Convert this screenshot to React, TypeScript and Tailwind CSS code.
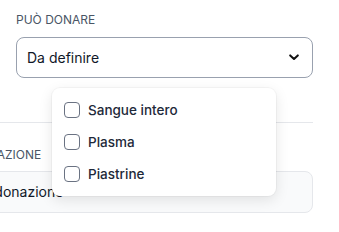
import React from 'react';

const options = ['Sangue intero', 'Plasma', 'Piastrine'];

export default function App() {
  return (
    <div className="relative w-[339px] h-[232px] overflow-hidden bg-white font-['Inter',sans-serif]">
      <div className="pl-4 pr-[26px] pt-3">
        <label className="block text-xs leading-4 uppercase text-gray-600">Può donare</label>

        <div className="relative mt-[9px]">
          <button
            type="button"
            className="flex h-[41px] w-full items-center justify-between rounded-lg border border-gray-400 bg-white pl-[10px] pr-[12px] text-sm text-gray-900"
          >
            <span>Da definire</span>
            <svg width="10" height="7" viewBox="0 0 10 7" fill="none" className="mr-px">
              <path d="M1.2 1.4 L5 5 L8.8 1.4" stroke="#111" strokeWidth="2" strokeLinecap="round" strokeLinejoin="round" />
            </svg>
          </button>

          {/* dropdown menu */}
          <div className="absolute left-9 top-[51px] z-10 w-[224px] rounded-lg bg-white py-1.5 shadow-[0_4px_14px_rgba(0,0,0,0.1),0_0_0_1px_rgba(0,0,0,0.03)]">
            {options.map((o) => (
              <label key={o} className="flex h-8 items-center gap-2 px-3">
                <span className="h-4 w-4 rounded-[4px] border border-gray-500 bg-white" />
                <span className="text-[13.5px] font-medium text-gray-800">{o}</span>
              </label>
            ))}
          </div>
        </div>

        <div className="-ml-4 mt-[44px] border-t border-gray-200" />

        <div className="-ml-[128px] pt-[24px]">
          <label className="block text-xs leading-4 uppercase text-gray-600">Data ultima donazione</label>
          <div className="mt-2 flex h-[42px] items-center rounded-lg border border-gray-200 bg-gray-50 pl-[27px] pr-3 text-sm text-gray-900">
            Data ultima donazione
          </div>
        </div>
      </div>
    </div>
  );
}
